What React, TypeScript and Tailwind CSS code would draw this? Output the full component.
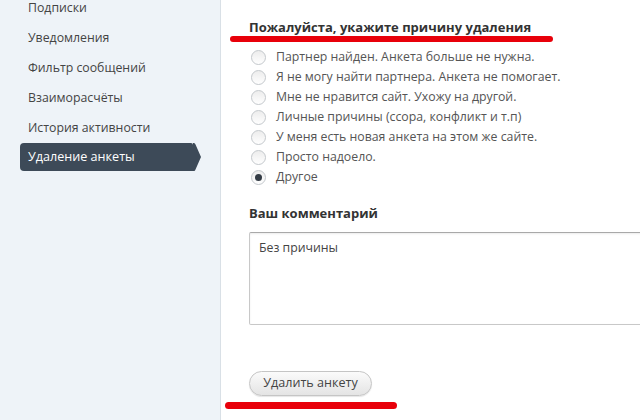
const menu = [
  "Подписки",
  "Уведомления",
  "Фильтр сообщений",
  "Взаиморасчёты",
  "История активности",
];

const reasons = [
  "Партнер найден. Анкета больше не нужна.",
  "Я не могу найти партнера. Анкета не помогает.",
  "Мне не нравится сайт. Ухожу на другой.",
  "Личные причины (ссора, конфликт и т.п)",
  "У меня есть новая анкета на этом же сайте.",
  "Просто надоело.",
  "Другое",
];

function Radio({ checked }: { checked?: boolean }) {
  return (
    <span className="w-[15px] h-[15px] rounded-full border border-[#c4c8cc] bg-gradient-to-b from-[#ececec] to-white flex items-center justify-center shrink-0">
      {checked && <span className="w-[7px] h-[7px] rounded-full bg-[#333c45]" />}
    </span>
  );
}

export default function App() {
  return (
    <div className="w-[640px] h-[420px] overflow-hidden flex bg-white font-['Open_Sans',sans-serif] text-[12.3px]">
      <aside className="w-[221px] shrink-0 bg-[#eef3f8] border-r border-[#d9e0e6] pl-[20px] -mt-[7px]">
        {menu.map((m) => (
          <div key={m} className="h-[30px] flex items-center pl-[8px] text-[#444]">
            {m}
          </div>
        ))}
        <div className="flex items-center h-[28px]">
          <div className="w-[173px] h-full bg-[#3d4a58] rounded-l-[4px] rounded-tr-[2px] flex items-center pl-[8px] text-white text-[12.6px]">
            Удаление анкеты
          </div>
          <svg width="8" height="28" viewBox="0 0 8 28" className="block">
            <path d="M0 0 L1 0 Q2 0 2.5 1.5 L8 14 L2.5 26.5 Q2 28 1 28 L0 28 Z" fill="#3d4a58" />
          </svg>
        </div>
      </aside>

      <main className="flex-1 pl-[28px] flex flex-col">
        <div className="mt-[17px] leading-[20px] font-bold text-[13px] text-[#333]">
          Пожалуйста, укажите причину удаления
        </div>
        <div className="-ml-[19px] w-[323px] h-[6px] -mt-px rounded-full bg-[#e8000a] blur-[0.6px]" />
        <div className="mt-[5px] flex flex-col">
          {reasons.map((r, i) => (
            <label key={r} className="h-[20px] flex items-center gap-[10px] pl-[2px] text-[#555]">
              <Radio checked={i === reasons.length - 1} />
              <span>{r}</span>
            </label>
          ))}
        </div>
        <div className="mt-[16px] leading-[20px] font-bold text-[13px] text-[#333]">Ваш комментарий</div>
        <div className="mt-[9px] h-[93px] w-[420px] border border-[#c8c8c8] border-t-[#a9a9a9] rounded-l-[2px] pl-[9px] pt-[6px] text-[#444] shadow-[inset_0_1px_2px_rgba(0,0,0,0.08)]">
          Без причины
        </div>
        <div className="mt-[46px]">
          <button className="w-[123px] h-[25px] rounded-full border border-[#c5c5c5] bg-gradient-to-b from-[#fbfbfb] to-[#e4e4e4] text-[#444] text-[12.6px] shadow-[0_1px_1px_rgba(0,0,0,0.1)]">
            Удалить анкету
          </button>
        </div>
        <div className="mt-[6px] -ml-[24px] w-[172px] h-[7px] rounded-full bg-[#e8000a] blur-[0.6px]" />
      </main>
    </div>
  );
}
